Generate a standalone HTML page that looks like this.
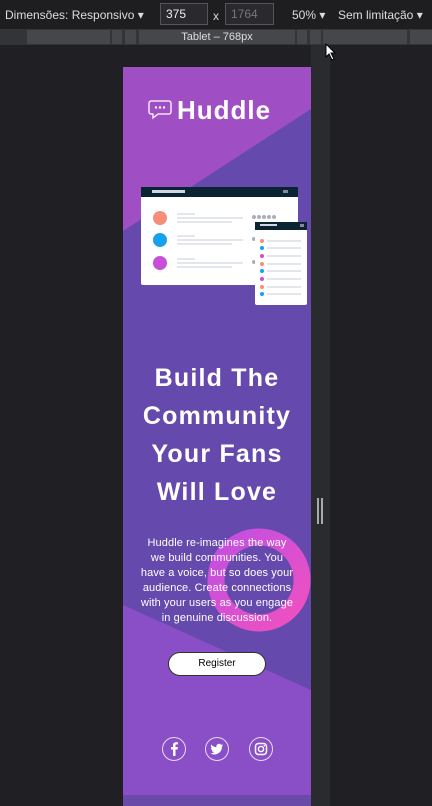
<!DOCTYPE html>
<html><head><meta charset="utf-8"><style>
*{margin:0;padding:0;box-sizing:border-box}
body{width:432px;height:806px;background:#202024;position:relative;overflow:hidden;font-family:"Liberation Sans",sans-serif}
.tb{position:absolute;left:0;top:0;width:432px;height:29px;background:#1e1e21;color:#ddd;font-size:12px}
.tb span{position:absolute;top:8px}
.inp{position:absolute;top:3px;height:22px;border:1px solid #555;background:#2a2a2e;font-size:12px;padding:3px 5px}
.rul{position:absolute;left:0;top:29px;width:432px;height:16px;background:#333438}
.rul div{position:absolute;top:1px;height:14px;background:#46474b}
.side{position:absolute;left:311px;top:45px;width:19px;height:761px;background:#2a2b2e}
.page{position:absolute;left:123px;top:67px;width:188px;height:739px;overflow:hidden}
.h{position:absolute;left:0;width:188px;text-align:center;color:#fff;font-weight:bold;font-size:25px;letter-spacing:1.2px;line-height:38px}
.p{position:absolute;left:0;top:469px;width:188px;text-align:center;color:#fff;font-size:11px;letter-spacing:.1px;line-height:15px;padding:0 16px}
.btn{position:absolute;left:45px;top:585px;width:98px;height:24px;border-radius:12px;background:#fff;border:1px solid #333;font-size:10px;text-align:center;line-height:22px;color:#000}
.ic{position:absolute;top:670px;width:24px;height:24px;border:1px solid rgba(255,255,255,.8);border-radius:50%}
</style></head><body>
<div class="tb">
<span style="left:5px">Dimensões: Responsivo ▾</span>
<div class="inp" style="left:160px;width:48px;color:#eee">375</div>
<span style="left:213px;top:9px">x</span>
<div class="inp" style="left:225px;width:49px;color:#777">1764</div>
<span style="left:292px">50% ▾</span>
<span style="left:338px">Sem limitação ▾</span>
</div>
<div class="rul">
<div style="left:27px;width:83px"></div><div style="left:112px;width:10px"></div><div style="left:125px;width:11px"></div>
<div style="left:139px;width:156px;text-align:center;color:#ddd;font-size:11px;line-height:14px">Tablet – 768px</div>
<div style="left:297px;width:10px"></div><div style="left:310px;width:11px"></div><div style="left:323px;width:84px"></div><div style="left:410px;width:22px"></div>
</div>
<div class="side"><div style="position:absolute;left:6px;top:453px;width:2px;height:26px;background:#aaa"></div><div style="position:absolute;left:10px;top:453px;width:2px;height:26px;background:#aaa"></div></div>
<svg style="position:absolute;left:325px;top:43px" width="12" height="18"><path d="M1 1 L1 14 L4 11 L7 17 L9 16 L6 10 L10 10 Z" fill="#fff" stroke="#000" stroke-width="1"/></svg>
<div class="page">
<svg width="188" height="739" style="position:absolute;left:0;top:0">
<defs><linearGradient id="g" x1="0" y1="0" x2="1" y2="1"><stop offset="0" stop-color="#c050e0"/><stop offset="1" stop-color="#f050c0"/></linearGradient></defs>
<rect width="188" height="739" fill="#6549ad"/>
<polygon points="0,0 188,0 188,42 0,164" fill="#a04ec4"/>
<polygon points="0,538 188,623 188,739 0,739" fill="#8a4fc7"/>
<rect y="728" width="188" height="11" fill="#6a4aa9"/>
<circle cx="136" cy="513" r="43" fill="none" stroke="url(#g)" stroke-width="17"/>
<g transform="translate(26,33)">
<path d="M2 1 H20 a2 2 0 0 1 2 2 V12 a2 2 0 0 1 -2 2 H9 L4 18 V14 H2 a2 2 0 0 1 -2 -2 V3 a2 2 0 0 1 2 -2z" fill="none" stroke="#fff" stroke-width="1.3"/>
<circle cx="7" cy="7.5" r="1.2" fill="#fff"/><circle cx="11" cy="7.5" r="1.2" fill="#fff"/><circle cx="15" cy="7.5" r="1.2" fill="#fff"/>
</g>
<text x="54" y="52" fill="#fff" font-family="Liberation Sans" font-weight="bold" font-size="26" letter-spacing="1">Huddle</text>
<g transform="translate(18,120)">
<rect width="157" height="98" rx="2" fill="#fff"/><rect width="157" height="10" fill="#0b2434"/>
<rect x="11" y="3" width="33" height="3" fill="#cfd8e0"/><rect x="142" y="3" width="5" height="3" fill="#889"/>
<circle cx="19" cy="31" r="7" fill="#f58f7c"/><circle cx="19" cy="53" r="7" fill="#16a0f0"/><circle cx="19" cy="76" r="7" fill="#c84fd8"/>
<g fill="#e3e7ec"><rect x="36" y="26" width="18" height="2"/><rect x="36" y="30" width="66" height="2"/><rect x="36" y="34" width="55" height="2"/>
<rect x="36" y="48" width="18" height="2"/><rect x="36" y="52" width="66" height="2"/><rect x="36" y="56" width="55" height="2"/>
<rect x="36" y="71" width="18" height="2"/><rect x="36" y="75" width="66" height="2"/><rect x="36" y="79" width="55" height="2"/></g>
<g fill="#a8b0bd"><circle cx="113" cy="30" r="2"/><circle cx="118" cy="30" r="2"/><circle cx="123" cy="30" r="2"/><circle cx="128" cy="30" r="2"/><circle cx="133" cy="30" r="2"/><circle cx="113" cy="52" r="2"/><circle cx="113" cy="75" r="2"/></g>
</g>
<g transform="translate(132,155)">
<rect width="52" height="83" rx="2" fill="#fff"/><rect width="52" height="8" fill="#0b2434"/>
<rect x="5" y="2" width="17" height="2" fill="#cfd8e0"/><rect x="45" y="2" width="4" height="3" fill="#889"/>
<g><circle cx="7" cy="19" r="2" fill="#f58f7c"/><circle cx="7" cy="26" r="2" fill="#16a0f0"/><circle cx="7" cy="34" r="2" fill="#c84fd8"/><circle cx="7" cy="42" r="2" fill="#f58f7c"/><circle cx="7" cy="49" r="2" fill="#16a0f0"/><circle cx="7" cy="57" r="2" fill="#c84fd8"/><circle cx="7" cy="65" r="2" fill="#f58f7c"/><circle cx="7" cy="72" r="2" fill="#16a0f0"/></g>
<g fill="#e3e7ec"><rect x="12" y="18" width="34" height="2"/><rect x="12" y="25" width="34" height="2"/><rect x="12" y="33" width="34" height="2"/><rect x="12" y="41" width="34" height="2"/><rect x="12" y="48" width="34" height="2"/><rect x="12" y="56" width="34" height="2"/><rect x="12" y="64" width="34" height="2"/><rect x="12" y="71" width="34" height="2"/></g>
</g>
</svg>
<div class="h" style="top:292px">Build The<br>Community<br>Your Fans<br>Will Love</div>
<div class="p">Huddle re-imagines the way we build communities. You have a voice, but so does your audience. Create connections with your users as you engage in genuine discussion.</div>
<div class="btn">Register</div>
<div class="ic" style="left:39px"><svg width="22" height="22"><path d="M12.5 18 V11.5 H14.5 L15 9 H12.5 V7.6 c0-.8.3-1.2 1.2-1.2 H15 V4.3 c-.4 0-1.1-.1-1.9-.1-2 0-3.1 1.1-3.1 3.1 V9 H8 v2.5 h2 V18z" fill="#fff"/></svg></div>
<div class="ic" style="left:82px"><svg width="22" height="22"><path d="M17 7.3c-.5.2-1 .4-1.5.4.6-.3 1-.9 1.2-1.5-.5.3-1.1.5-1.7.6a2.6 2.6 0 0 0-4.5 2.4C8.3 9.1 6.4 8 5.2 6.5c-.7 1.2-.3 2.7.8 3.5-.4 0-.8-.1-1.2-.3 0 1.3.9 2.4 2.1 2.6-.4.1-.8.1-1.2 0 .3 1.1 1.3 1.8 2.4 1.8A5.3 5.3 0 0 1 4.5 15.2 7.4 7.4 0 0 0 15.9 8.6c.5-.4.9-.8 1.1-1.3z" fill="#fff"/></svg></div>
<div class="ic" style="left:126px"><svg width="22" height="22"><rect x="5.5" y="5.5" width="11" height="11" rx="3" fill="none" stroke="#fff" stroke-width="1.5"/><circle cx="11" cy="11" r="2.6" fill="none" stroke="#fff" stroke-width="1.4"/><circle cx="14.3" cy="7.7" r=".8" fill="#fff"/></svg></div>
</div>
</body></html>
